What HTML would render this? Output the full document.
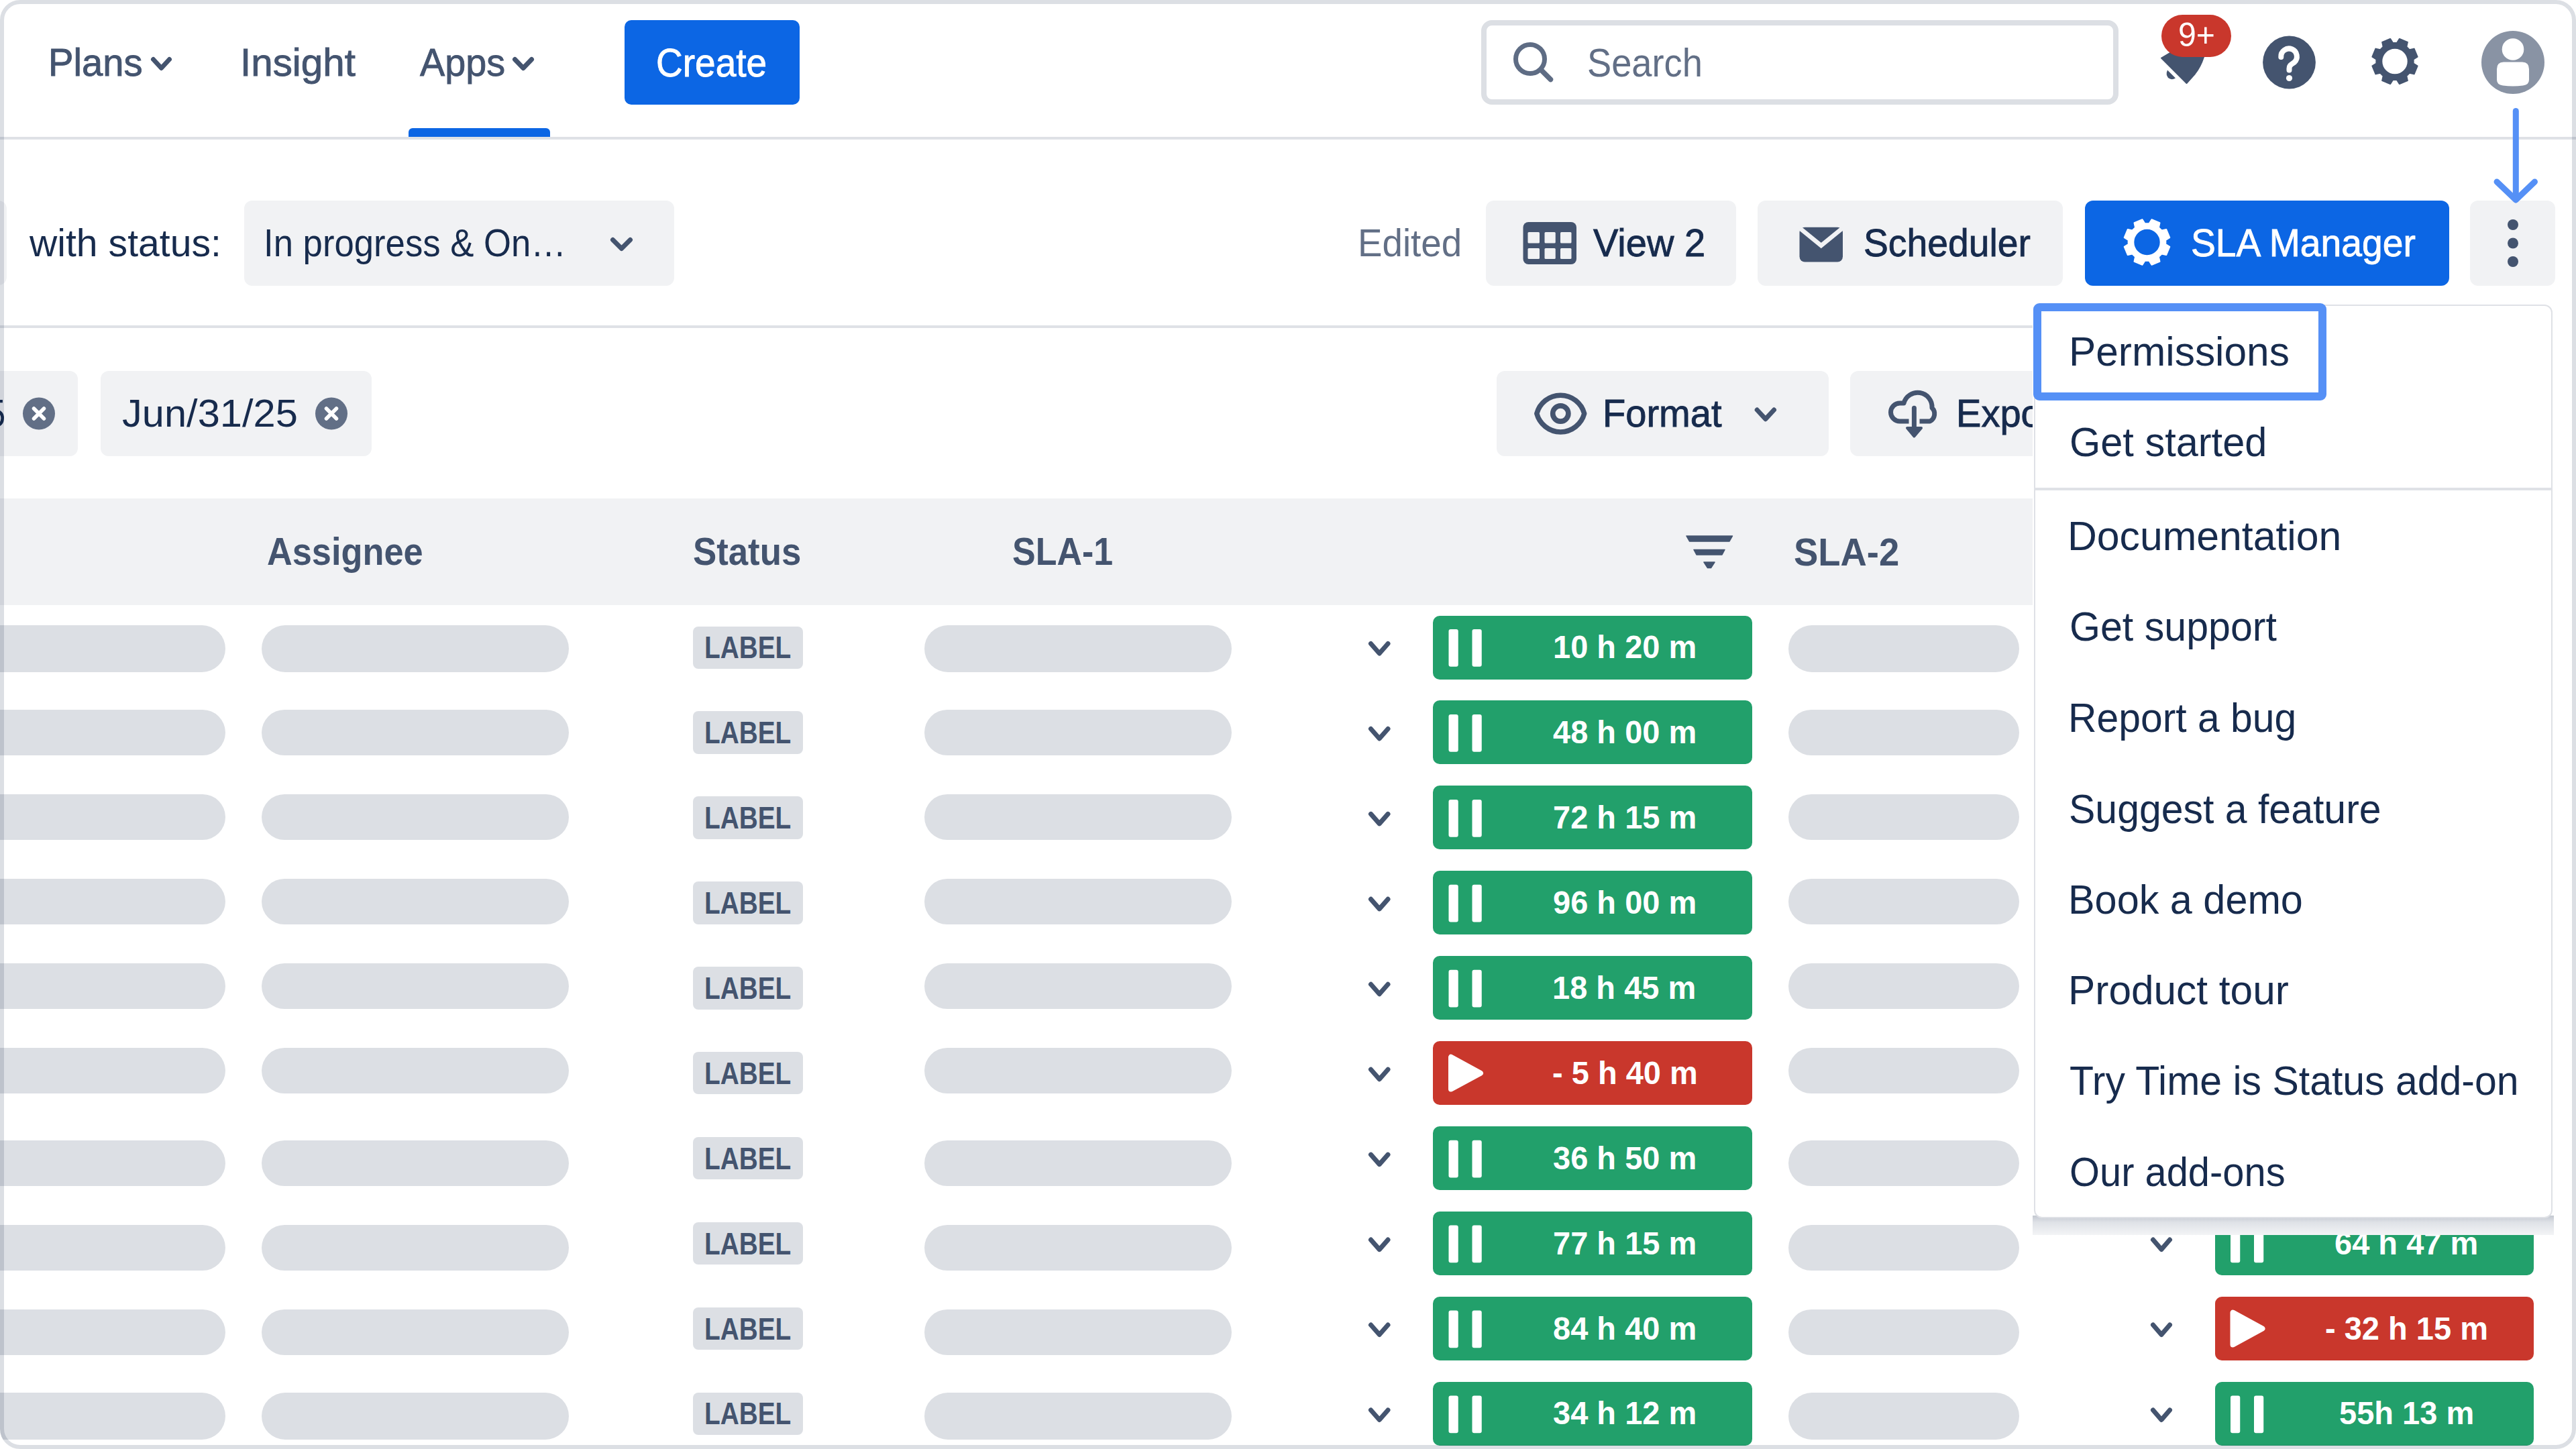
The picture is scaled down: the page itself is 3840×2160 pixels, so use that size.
<!DOCTYPE html>
<html><head><meta charset="utf-8"><style>
html,body{margin:0;padding:0;background:#fff;width:3840px;height:2160px;overflow:hidden}
#c{position:absolute;left:0;top:0;width:3840px;height:2160px;overflow:hidden;border-radius:30px;background:#fff}
#c div{position:absolute}
.t{white-space:nowrap;font-family:"Liberation Sans",sans-serif;transform-origin:0 0}
svg{position:absolute;left:0;top:0}
#frame{position:absolute;left:0;top:0;width:3840px;height:2160px;box-sizing:border-box;border:6px solid rgba(9,30,66,0.142);border-radius:30px}
</style></head><body>
<div id="c">
<div style="left:609.00px;top:191.00px;width:210.50px;height:15.00px;background:#0c66e4;border-radius:6px 6px 0 0;"></div><div style="left:0.00px;top:204.00px;width:3840.00px;height:4.00px;background:#dfe1e6;border-radius:0;"></div><div style="left:930.50px;top:29.50px;width:261.50px;height:126.50px;background:#0c66e4;border-radius:10px;"></div><div style="left:2207.50px;top:29.50px;width:950.50px;height:126.50px;background:#fff;border-radius:16px;box-sizing:border-box;border:8px solid #dcdfe4;"></div><div style="left:-20.00px;top:299.00px;width:30.00px;height:126.00px;background:#f1f2f4;border-radius:12px;"></div><div style="left:364.00px;top:299.00px;width:641.00px;height:127.00px;background:#f1f2f4;border-radius:12px;"></div><div style="left:2215.00px;top:299.00px;width:372.50px;height:126.50px;background:#f1f2f4;border-radius:12px;"></div><div style="left:2620.00px;top:299.00px;width:455.00px;height:127.00px;background:#f1f2f4;border-radius:12px;"></div><div style="left:3107.50px;top:299.00px;width:543.00px;height:127.00px;background:#0c66e4;border-radius:12px;"></div><div style="left:3682.00px;top:299.00px;width:126.50px;height:127.00px;background:#f1f2f4;border-radius:12px;"></div><div style="left:0.00px;top:485.00px;width:3840.00px;height:4.00px;background:#dfe1e6;border-radius:0;"></div><div style="left:-40.00px;top:553.00px;width:156.00px;height:126.50px;background:#f1f2f4;border-radius:12px;"></div><div style="left:150.00px;top:553.00px;width:403.75px;height:126.50px;background:#f1f2f4;border-radius:12px;"></div><div style="left:2231.00px;top:553.00px;width:495.00px;height:126.50px;background:#f1f2f4;border-radius:12px;"></div><div style="left:2758.00px;top:553.00px;width:442.00px;height:126.50px;background:#f1f2f4;border-radius:12px;"></div><div style="left:0.00px;top:743.00px;width:3840.00px;height:159.00px;background:#f1f2f4;border-radius:0;"></div><div style="left:-40.00px;top:931.75px;width:375.75px;height:70.15px;background:#dcdfe4;border-radius:40px;"></div><div style="left:390.00px;top:931.75px;width:458.00px;height:70.15px;background:#dcdfe4;border-radius:40px;"></div><div style="left:1378.00px;top:931.75px;width:457.60px;height:70.15px;background:#dcdfe4;border-radius:40px;"></div><div style="left:2666.00px;top:931.75px;width:344.00px;height:70.15px;background:#dcdfe4;border-radius:40px;"></div><div style="left:1033.25px;top:933.50px;width:163.50px;height:63.25px;background:#dcdfe4;border-radius:8px;"></div><div style="left:2136.00px;top:917.50px;width:475.75px;height:95.00px;background:#22a06b;border-radius:10px;"></div><div style="left:3301.50px;top:917.50px;width:475.75px;height:95.00px;background:#22a06b;border-radius:10px;"></div><div style="left:-40.00px;top:1058.00px;width:375.75px;height:67.60px;background:#dcdfe4;border-radius:40px;"></div><div style="left:390.00px;top:1058.00px;width:458.00px;height:67.60px;background:#dcdfe4;border-radius:40px;"></div><div style="left:1378.00px;top:1058.00px;width:457.60px;height:67.60px;background:#dcdfe4;border-radius:40px;"></div><div style="left:2666.00px;top:1058.00px;width:344.00px;height:67.60px;background:#dcdfe4;border-radius:40px;"></div><div style="left:1033.25px;top:1060.44px;width:163.50px;height:63.25px;background:#dcdfe4;border-radius:8px;"></div><div style="left:2136.00px;top:1044.44px;width:475.75px;height:95.00px;background:#22a06b;border-radius:10px;"></div><div style="left:3301.50px;top:1044.44px;width:475.75px;height:95.00px;background:#22a06b;border-radius:10px;"></div><div style="left:-40.00px;top:1183.70px;width:375.75px;height:68.30px;background:#dcdfe4;border-radius:40px;"></div><div style="left:390.00px;top:1183.70px;width:458.00px;height:68.30px;background:#dcdfe4;border-radius:40px;"></div><div style="left:1378.00px;top:1183.70px;width:457.60px;height:68.30px;background:#dcdfe4;border-radius:40px;"></div><div style="left:2666.00px;top:1183.70px;width:344.00px;height:68.30px;background:#dcdfe4;border-radius:40px;"></div><div style="left:1033.25px;top:1187.38px;width:163.50px;height:63.25px;background:#dcdfe4;border-radius:8px;"></div><div style="left:2136.00px;top:1171.38px;width:475.75px;height:95.00px;background:#22a06b;border-radius:10px;"></div><div style="left:3301.50px;top:1171.38px;width:475.75px;height:95.00px;background:#22a06b;border-radius:10px;"></div><div style="left:-40.00px;top:1310.00px;width:375.75px;height:68.00px;background:#dcdfe4;border-radius:40px;"></div><div style="left:390.00px;top:1310.00px;width:458.00px;height:68.00px;background:#dcdfe4;border-radius:40px;"></div><div style="left:1378.00px;top:1310.00px;width:457.60px;height:68.00px;background:#dcdfe4;border-radius:40px;"></div><div style="left:2666.00px;top:1310.00px;width:344.00px;height:68.00px;background:#dcdfe4;border-radius:40px;"></div><div style="left:1033.25px;top:1314.32px;width:163.50px;height:63.25px;background:#dcdfe4;border-radius:8px;"></div><div style="left:2136.00px;top:1298.32px;width:475.75px;height:95.00px;background:#22a06b;border-radius:10px;"></div><div style="left:3301.50px;top:1298.32px;width:475.75px;height:95.00px;background:#22a06b;border-radius:10px;"></div><div style="left:-40.00px;top:1436.00px;width:375.75px;height:67.80px;background:#dcdfe4;border-radius:40px;"></div><div style="left:390.00px;top:1436.00px;width:458.00px;height:67.80px;background:#dcdfe4;border-radius:40px;"></div><div style="left:1378.00px;top:1436.00px;width:457.60px;height:67.80px;background:#dcdfe4;border-radius:40px;"></div><div style="left:2666.00px;top:1436.00px;width:344.00px;height:67.80px;background:#dcdfe4;border-radius:40px;"></div><div style="left:1033.25px;top:1441.26px;width:163.50px;height:63.25px;background:#dcdfe4;border-radius:8px;"></div><div style="left:2136.00px;top:1425.26px;width:475.75px;height:95.00px;background:#22a06b;border-radius:10px;"></div><div style="left:3301.50px;top:1425.26px;width:475.75px;height:95.00px;background:#22a06b;border-radius:10px;"></div><div style="left:-40.00px;top:1561.70px;width:375.75px;height:68.20px;background:#dcdfe4;border-radius:40px;"></div><div style="left:390.00px;top:1561.70px;width:458.00px;height:68.20px;background:#dcdfe4;border-radius:40px;"></div><div style="left:1378.00px;top:1561.70px;width:457.60px;height:68.20px;background:#dcdfe4;border-radius:40px;"></div><div style="left:2666.00px;top:1561.70px;width:344.00px;height:68.20px;background:#dcdfe4;border-radius:40px;"></div><div style="left:1033.25px;top:1568.20px;width:163.50px;height:63.25px;background:#dcdfe4;border-radius:8px;"></div><div style="left:2136.00px;top:1552.20px;width:475.75px;height:95.00px;background:#c9372c;border-radius:10px;"></div><div style="left:3301.50px;top:1552.20px;width:475.75px;height:95.00px;background:#22a06b;border-radius:10px;"></div><div style="left:-40.00px;top:1700.00px;width:375.75px;height:67.75px;background:#dcdfe4;border-radius:40px;"></div><div style="left:390.00px;top:1700.00px;width:458.00px;height:67.75px;background:#dcdfe4;border-radius:40px;"></div><div style="left:1378.00px;top:1700.00px;width:457.60px;height:67.75px;background:#dcdfe4;border-radius:40px;"></div><div style="left:2666.00px;top:1700.00px;width:344.00px;height:67.75px;background:#dcdfe4;border-radius:40px;"></div><div style="left:1033.25px;top:1695.14px;width:163.50px;height:63.25px;background:#dcdfe4;border-radius:8px;"></div><div style="left:2136.00px;top:1679.14px;width:475.75px;height:95.00px;background:#22a06b;border-radius:10px;"></div><div style="left:3301.50px;top:1679.14px;width:475.75px;height:95.00px;background:#22a06b;border-radius:10px;"></div><div style="left:-40.00px;top:1826.00px;width:375.75px;height:67.75px;background:#dcdfe4;border-radius:40px;"></div><div style="left:390.00px;top:1826.00px;width:458.00px;height:67.75px;background:#dcdfe4;border-radius:40px;"></div><div style="left:1378.00px;top:1826.00px;width:457.60px;height:67.75px;background:#dcdfe4;border-radius:40px;"></div><div style="left:2666.00px;top:1826.00px;width:344.00px;height:67.75px;background:#dcdfe4;border-radius:40px;"></div><div style="left:1033.25px;top:1822.08px;width:163.50px;height:63.25px;background:#dcdfe4;border-radius:8px;"></div><div style="left:2136.00px;top:1806.08px;width:475.75px;height:95.00px;background:#22a06b;border-radius:10px;"></div><div style="left:3301.50px;top:1806.08px;width:475.75px;height:95.00px;background:#22a06b;border-radius:10px;"></div><div style="left:-40.00px;top:1952.00px;width:375.75px;height:68.00px;background:#dcdfe4;border-radius:40px;"></div><div style="left:390.00px;top:1952.00px;width:458.00px;height:68.00px;background:#dcdfe4;border-radius:40px;"></div><div style="left:1378.00px;top:1952.00px;width:457.60px;height:68.00px;background:#dcdfe4;border-radius:40px;"></div><div style="left:2666.00px;top:1952.00px;width:344.00px;height:68.00px;background:#dcdfe4;border-radius:40px;"></div><div style="left:1033.25px;top:1949.02px;width:163.50px;height:63.25px;background:#dcdfe4;border-radius:8px;"></div><div style="left:2136.00px;top:1933.02px;width:475.75px;height:95.00px;background:#22a06b;border-radius:10px;"></div><div style="left:3301.50px;top:1933.02px;width:475.75px;height:95.00px;background:#c9372c;border-radius:10px;"></div><div style="left:-40.00px;top:2076.00px;width:375.75px;height:70.00px;background:#dcdfe4;border-radius:40px;"></div><div style="left:390.00px;top:2076.00px;width:458.00px;height:70.00px;background:#dcdfe4;border-radius:40px;"></div><div style="left:1378.00px;top:2076.00px;width:457.60px;height:70.00px;background:#dcdfe4;border-radius:40px;"></div><div style="left:2666.00px;top:2076.00px;width:344.00px;height:70.00px;background:#dcdfe4;border-radius:40px;"></div><div style="left:1033.25px;top:2075.96px;width:163.50px;height:63.25px;background:#dcdfe4;border-radius:8px;"></div><div style="left:2136.00px;top:2059.96px;width:475.75px;height:95.00px;background:#22a06b;border-radius:10px;"></div><div style="left:3301.50px;top:2059.96px;width:475.75px;height:95.00px;background:#22a06b;border-radius:10px;"></div>
<svg width="3840" height="2160" viewBox="0 0 3840 2160"><path d="M228.50,88.50 L240.50,101.50 L252.50,88.50" fill="none" stroke="#44546f" stroke-width="7" stroke-linecap="round" stroke-linejoin="round"/><path d="M767.50,88.50 L780.00,101.50 L792.50,88.50" fill="none" stroke="#44546f" stroke-width="7" stroke-linecap="round" stroke-linejoin="round"/><circle cx="2281" cy="88" r="21.5" fill="none" stroke="#5e6c84" stroke-width="7"/><path d="M2298,105 L2311.5,118.5" stroke="#5e6c84" stroke-width="7.5" stroke-linecap="round"/><path d="M3222,86.5 L3250,70 L3290,70 L3285,85 Q3280,100 3272,110 L3259.5,124 Z" fill="#44546f" stroke="#44546f" stroke-width="2" stroke-linejoin="round"/><path d="M3231,104.5 L3243,116.5 Q3237,120 3232,116 Q3228,111 3231,104.5 Z" fill="#44546f"/><circle cx="3412.5" cy="93" r="39.4" fill="#44546f"/><path d="M3400.3,85 A11.8,11.8 0 1 1 3420,93 C3415,96.5 3412.5,97.5 3412.5,102 L3412.5,104.5" fill="none" stroke="#fff" stroke-width="8" stroke-linecap="round" stroke-linejoin="round"/><circle cx="3412.5" cy="116.5" r="4.6" fill="#fff"/><path d="M3573.13,63.88 L3576.91,57.90 L3588.87,62.86 L3587.32,69.76 L3591.74,74.18 L3598.64,72.63 L3603.60,84.59 L3597.62,88.37 L3597.62,94.63 L3603.60,98.41 L3598.64,110.37 L3591.74,108.82 L3587.32,113.24 L3588.87,120.14 L3576.91,125.10 L3573.13,119.12 L3566.87,119.12 L3563.09,125.10 L3551.13,120.14 L3552.68,113.24 L3548.26,108.82 L3541.36,110.37 L3536.40,98.41 L3542.38,94.63 L3542.38,88.37 L3536.40,84.59 L3541.36,72.63 L3548.26,74.18 L3552.68,69.76 L3551.13,62.86 L3563.09,57.90 L3566.87,63.88 Z M3589.70,91.50 A19.7,19.7 0 1 0 3550.30,91.50 A19.7,19.7 0 1 0 3589.70,91.50 Z" fill="#44546f" fill-rule="evenodd" stroke="#44546f" stroke-width="2" stroke-linejoin="round"/><circle cx="3746" cy="93" r="47" fill="#8993a4"/><circle cx="3746" cy="73.5" r="16.3" fill="#fff"/><path d="M3722,103 Q3722,92.4 3732,92.4 L3760,92.4 Q3770,92.4 3770,103 L3770,119 Q3770,126.5 3761,127.5 Q3746,129.5 3731,127.5 Q3722,126.5 3722,119 Z" fill="#fff"/><path d="M3750.3,165.5 L3750.3,297" stroke="#5590f6" stroke-width="9" stroke-linecap="round"/><path d="M3722,271 L3750.3,298 L3778.5,271" fill="none" stroke="#5590f6" stroke-width="9" stroke-linecap="round" stroke-linejoin="round"/><path d="M913.50,357.50 L926.50,370.50 L939.50,357.50" fill="none" stroke="#44546f" stroke-width="7" stroke-linecap="round" stroke-linejoin="round"/><rect x="2270.5" y="331" width="79.5" height="63" rx="8" fill="#44546f"/><rect x="2277.5" y="346" width="17.5" height="16.5" rx="1.5" fill="#f1f2f4"/><rect x="2277.5" y="370" width="17.5" height="16" rx="1.5" fill="#f1f2f4"/><rect x="2302.5" y="346" width="16.25" height="16.5" rx="1.5" fill="#f1f2f4"/><rect x="2302.5" y="370" width="16.25" height="16" rx="1.5" fill="#f1f2f4"/><rect x="2326" y="346" width="16.5" height="16.5" rx="1.5" fill="#f1f2f4"/><rect x="2326" y="370" width="16.5" height="16" rx="1.5" fill="#f1f2f4"/><rect x="2682.5" y="338.75" width="64.5" height="51.75" rx="8" fill="#44546f"/><path d="M2684,341 L2714.75,366 L2745.5,341" fill="none" stroke="#f1f2f4" stroke-width="6.5" stroke-linejoin="miter"/><path d="M3203.65,333.18 L3207.45,327.21 L3219.48,332.19 L3217.95,339.10 L3222.40,343.55 L3229.31,342.02 L3234.29,354.05 L3228.32,357.85 L3228.32,364.15 L3234.29,367.95 L3229.31,379.98 L3222.40,378.45 L3217.95,382.90 L3219.48,389.81 L3207.45,394.79 L3203.65,388.82 L3197.35,388.82 L3193.55,394.79 L3181.52,389.81 L3183.05,382.90 L3178.60,378.45 L3171.69,379.98 L3166.71,367.95 L3172.68,364.15 L3172.68,357.85 L3166.71,354.05 L3171.69,342.02 L3178.60,343.55 L3183.05,339.10 L3181.52,332.19 L3193.55,327.21 L3197.35,333.18 Z M3220.70,361.00 A20.2,20.2 0 1 0 3180.30,361.00 A20.2,20.2 0 1 0 3220.70,361.00 Z" fill="#fff" fill-rule="evenodd" stroke="#fff" stroke-width="2" stroke-linejoin="round"/><circle cx="3746" cy="335" r="8" fill="#44546f"/><circle cx="3746" cy="362.5" r="8" fill="#44546f"/><circle cx="3746" cy="390" r="8" fill="#44546f"/><circle cx="58" cy="616.5" r="24" fill="#626f86"/><path d="M50.5,609.0 L65.5,624.0 M65.5,609.0 L50.5,624.0" stroke="#fff" stroke-width="5.5" stroke-linecap="round"/><circle cx="494" cy="616.5" r="24" fill="#626f86"/><path d="M486.5,609.0 L501.5,624.0 M501.5,609.0 L486.5,624.0" stroke="#fff" stroke-width="5.5" stroke-linecap="round"/><path d="M2290.8,616.5 C2295,601 2309,589.2 2326.25,589.2 C2343.5,589.2 2357.5,601 2361.7,616.5 C2357.5,632 2343.5,643.9 2326.25,643.9 C2309,643.9 2295,632 2290.8,616.5 Z" fill="none" stroke="#44546f" stroke-width="7.5" stroke-linejoin="round"/><circle cx="2326.3" cy="616.5" r="11.6" fill="none" stroke="#44546f" stroke-width="7.6"/><path d="M2619.20,611.00 L2631.85,624.70 L2644.50,611.00" fill="none" stroke="#44546f" stroke-width="7" stroke-linecap="round" stroke-linejoin="round"/><path d="M2845.5,628 L2832,628 A13.5,13.5 0 0 1 2832,601 L2838,601 A21.4,21.4 0 0 1 2880,608 A12.5,12.5 0 0 1 2877,628 L2861.5,628" fill="none" stroke="#44546f" stroke-width="7" stroke-linejoin="round"/><path d="M2853.4,608.3 L2853.4,644" stroke="#44546f" stroke-width="7" stroke-linecap="round"/><path d="M2843,638 L2864,638 L2853.4,650.5 Z" fill="#44546f" stroke="#44546f" stroke-width="4" stroke-linejoin="round"/><path d="M2514,799 L2582.5,799 L2578,807 L2518.5,807 Z M2525,819.5 L2571,819.5 L2567,827 L2529,827 Z M2540,838 L2556,838 L2550.5,846.5 L2545.5,846.5 Z" fill="#44546f" stroke="#44546f" stroke-width="1.5" stroke-linejoin="round"/><path d="M2043.50,959.50 L2056.25,974.00 L2069.00,959.50" fill="none" stroke="#44546f" stroke-width="7" stroke-linecap="round" stroke-linejoin="round"/><rect x="2159.5" y="938.00" width="14.25" height="55.75" rx="3" fill="#fff"/><rect x="2194.5" y="938.00" width="14.25" height="55.75" rx="3" fill="#fff"/><path d="M3209.50,959.50 L3222.00,974.00 L3234.50,959.50" fill="none" stroke="#44546f" stroke-width="7" stroke-linecap="round" stroke-linejoin="round"/><rect x="3325.0" y="938.00" width="14.25" height="55.75" rx="3" fill="#fff"/><rect x="3360.0" y="938.00" width="14.25" height="55.75" rx="3" fill="#fff"/><path d="M2043.50,1086.44 L2056.25,1100.94 L2069.00,1086.44" fill="none" stroke="#44546f" stroke-width="7" stroke-linecap="round" stroke-linejoin="round"/><rect x="2159.5" y="1064.94" width="14.25" height="55.75" rx="3" fill="#fff"/><rect x="2194.5" y="1064.94" width="14.25" height="55.75" rx="3" fill="#fff"/><path d="M3209.50,1086.44 L3222.00,1100.94 L3234.50,1086.44" fill="none" stroke="#44546f" stroke-width="7" stroke-linecap="round" stroke-linejoin="round"/><rect x="3325.0" y="1064.94" width="14.25" height="55.75" rx="3" fill="#fff"/><rect x="3360.0" y="1064.94" width="14.25" height="55.75" rx="3" fill="#fff"/><path d="M2043.50,1213.38 L2056.25,1227.88 L2069.00,1213.38" fill="none" stroke="#44546f" stroke-width="7" stroke-linecap="round" stroke-linejoin="round"/><rect x="2159.5" y="1191.88" width="14.25" height="55.75" rx="3" fill="#fff"/><rect x="2194.5" y="1191.88" width="14.25" height="55.75" rx="3" fill="#fff"/><path d="M3209.50,1213.38 L3222.00,1227.88 L3234.50,1213.38" fill="none" stroke="#44546f" stroke-width="7" stroke-linecap="round" stroke-linejoin="round"/><rect x="3325.0" y="1191.88" width="14.25" height="55.75" rx="3" fill="#fff"/><rect x="3360.0" y="1191.88" width="14.25" height="55.75" rx="3" fill="#fff"/><path d="M2043.50,1340.32 L2056.25,1354.82 L2069.00,1340.32" fill="none" stroke="#44546f" stroke-width="7" stroke-linecap="round" stroke-linejoin="round"/><rect x="2159.5" y="1318.82" width="14.25" height="55.75" rx="3" fill="#fff"/><rect x="2194.5" y="1318.82" width="14.25" height="55.75" rx="3" fill="#fff"/><path d="M3209.50,1340.32 L3222.00,1354.82 L3234.50,1340.32" fill="none" stroke="#44546f" stroke-width="7" stroke-linecap="round" stroke-linejoin="round"/><rect x="3325.0" y="1318.82" width="14.25" height="55.75" rx="3" fill="#fff"/><rect x="3360.0" y="1318.82" width="14.25" height="55.75" rx="3" fill="#fff"/><path d="M2043.50,1467.26 L2056.25,1481.76 L2069.00,1467.26" fill="none" stroke="#44546f" stroke-width="7" stroke-linecap="round" stroke-linejoin="round"/><rect x="2159.5" y="1445.76" width="14.25" height="55.75" rx="3" fill="#fff"/><rect x="2194.5" y="1445.76" width="14.25" height="55.75" rx="3" fill="#fff"/><path d="M3209.50,1467.26 L3222.00,1481.76 L3234.50,1467.26" fill="none" stroke="#44546f" stroke-width="7" stroke-linecap="round" stroke-linejoin="round"/><rect x="3325.0" y="1445.76" width="14.25" height="55.75" rx="3" fill="#fff"/><rect x="3360.0" y="1445.76" width="14.25" height="55.75" rx="3" fill="#fff"/><path d="M2043.50,1594.20 L2056.25,1608.70 L2069.00,1594.20" fill="none" stroke="#44546f" stroke-width="7" stroke-linecap="round" stroke-linejoin="round"/><path d="M2163,1575.80 L2163,1623.60 L2207,1599.70 Z" fill="#fff" stroke="#fff" stroke-width="8" stroke-linejoin="round"/><path d="M3209.50,1594.20 L3222.00,1608.70 L3234.50,1594.20" fill="none" stroke="#44546f" stroke-width="7" stroke-linecap="round" stroke-linejoin="round"/><rect x="3325.0" y="1572.70" width="14.25" height="55.75" rx="3" fill="#fff"/><rect x="3360.0" y="1572.70" width="14.25" height="55.75" rx="3" fill="#fff"/><path d="M2043.50,1721.14 L2056.25,1735.64 L2069.00,1721.14" fill="none" stroke="#44546f" stroke-width="7" stroke-linecap="round" stroke-linejoin="round"/><rect x="2159.5" y="1699.64" width="14.25" height="55.75" rx="3" fill="#fff"/><rect x="2194.5" y="1699.64" width="14.25" height="55.75" rx="3" fill="#fff"/><path d="M3209.50,1721.14 L3222.00,1735.64 L3234.50,1721.14" fill="none" stroke="#44546f" stroke-width="7" stroke-linecap="round" stroke-linejoin="round"/><rect x="3325.0" y="1699.64" width="14.25" height="55.75" rx="3" fill="#fff"/><rect x="3360.0" y="1699.64" width="14.25" height="55.75" rx="3" fill="#fff"/><path d="M2043.50,1848.08 L2056.25,1862.58 L2069.00,1848.08" fill="none" stroke="#44546f" stroke-width="7" stroke-linecap="round" stroke-linejoin="round"/><rect x="2159.5" y="1826.58" width="14.25" height="55.75" rx="3" fill="#fff"/><rect x="2194.5" y="1826.58" width="14.25" height="55.75" rx="3" fill="#fff"/><path d="M3209.50,1848.08 L3222.00,1862.58 L3234.50,1848.08" fill="none" stroke="#44546f" stroke-width="7" stroke-linecap="round" stroke-linejoin="round"/><rect x="3325.0" y="1826.58" width="14.25" height="55.75" rx="3" fill="#fff"/><rect x="3360.0" y="1826.58" width="14.25" height="55.75" rx="3" fill="#fff"/><path d="M2043.50,1975.02 L2056.25,1989.52 L2069.00,1975.02" fill="none" stroke="#44546f" stroke-width="7" stroke-linecap="round" stroke-linejoin="round"/><rect x="2159.5" y="1953.52" width="14.25" height="55.75" rx="3" fill="#fff"/><rect x="2194.5" y="1953.52" width="14.25" height="55.75" rx="3" fill="#fff"/><path d="M3209.50,1975.02 L3222.00,1989.52 L3234.50,1975.02" fill="none" stroke="#44546f" stroke-width="7" stroke-linecap="round" stroke-linejoin="round"/><path d="M3328.5,1956.62 L3328.5,2004.42 L3372.5,1980.52 Z" fill="#fff" stroke="#fff" stroke-width="8" stroke-linejoin="round"/><path d="M2043.50,2101.96 L2056.25,2116.46 L2069.00,2101.96" fill="none" stroke="#44546f" stroke-width="7" stroke-linecap="round" stroke-linejoin="round"/><rect x="2159.5" y="2080.46" width="14.25" height="55.75" rx="3" fill="#fff"/><rect x="2194.5" y="2080.46" width="14.25" height="55.75" rx="3" fill="#fff"/><path d="M3209.50,2101.96 L3222.00,2116.46 L3234.50,2101.96" fill="none" stroke="#44546f" stroke-width="7" stroke-linecap="round" stroke-linejoin="round"/><rect x="3325.0" y="2080.46" width="14.25" height="55.75" rx="3" fill="#fff"/><rect x="3360.0" y="2080.46" width="14.25" height="55.75" rx="3" fill="#fff"/></svg>
<div class="t" style="left:72.36px;top:64px;font-size:58px;line-height:58px;color:#44546f;transform:scaleX(0.9687);-webkit-text-stroke:0.9px #44546f;">Plans</div><div class="t" style="left:357.60px;top:64px;font-size:58px;line-height:58px;color:#44546f;transform:scaleX(1.0060);-webkit-text-stroke:0.9px #44546f;">Insight</div><div class="t" style="left:625.86px;top:64px;font-size:58px;line-height:58px;color:#44546f;transform:scaleX(0.9611);-webkit-text-stroke:0.9px #44546f;">Apps</div><div class="t" style="left:978.25px;top:64px;font-size:60px;line-height:60px;color:#fff;transform:scaleX(0.9172);-webkit-text-stroke:0.9px #fff;">Create</div><div class="t" style="left:2365.56px;top:64px;font-size:60px;line-height:60px;color:#626f86;transform:scaleX(0.9041);">Search</div><div class="t" style="left:44.14px;top:333px;font-size:58px;line-height:58px;color:#172b4d;transform:scaleX(0.9857);">with status:</div><div class="t" style="left:392.63px;top:333px;font-size:58px;line-height:58px;color:#172b4d;transform:scaleX(0.9084);">In progress &amp; On…</div><div class="t" style="left:2024.23px;top:333px;font-size:58px;line-height:58px;color:#626f86;transform:scaleX(0.9438);">Edited</div><div class="t" style="left:2374.72px;top:333px;font-size:58px;line-height:58px;color:#172b4d;transform:scaleX(0.9659);-webkit-text-stroke:0.9px #172b4d;">View 2</div><div class="t" style="left:2778.01px;top:333px;font-size:58px;line-height:58px;color:#172b4d;transform:scaleX(0.9528);-webkit-text-stroke:0.9px #172b4d;">Scheduler</div><div class="t" style="left:3266.01px;top:333px;font-size:58px;line-height:58px;color:#fff;transform:scaleX(0.9526);-webkit-text-stroke:0.9px #fff;">SLA Manager</div><div class="t" style="left:-20.02px;top:587px;font-size:58px;line-height:58px;color:#172b4d;transform:scaleX(0.8711);">5</div><div class="t" style="left:181.61px;top:587px;font-size:58px;line-height:58px;color:#172b4d;transform:scaleX(1.0275);">Jun/31/25</div><div class="t" style="left:2388.88px;top:587px;font-size:58px;line-height:58px;color:#172b4d;transform:scaleX(0.9664);-webkit-text-stroke:0.9px #172b4d;">Format</div><div class="t" style="left:2915.68px;top:587px;font-size:58px;line-height:58px;color:#172b4d;transform:scaleX(0.9664);-webkit-text-stroke:0.9px #172b4d;">Export</div><div class="t" style="left:398.19px;top:793px;font-size:58px;line-height:58px;color:#44546f;font-weight:700;transform:scaleX(0.9019);">Assignee</div><div class="t" style="left:1033.42px;top:793px;font-size:58px;line-height:58px;color:#44546f;font-weight:700;transform:scaleX(0.9097);">Status</div><div class="t" style="left:1508.94px;top:793px;font-size:58px;line-height:58px;color:#44546f;font-weight:700;transform:scaleX(0.8956);">SLA-1</div><div class="t" style="left:2674.37px;top:794px;font-size:58px;line-height:58px;color:#44546f;font-weight:700;transform:scaleX(0.9385);">SLA-2</div><div class="t" style="left:1049.88px;top:942px;font-size:46px;line-height:46px;color:#44546f;font-weight:700;transform:scaleX(0.8434);">LABEL</div><div class="t" style="left:2314.56px;top:940px;font-size:49px;line-height:49px;color:#fff;font-weight:700;transform:scaleX(0.9594);">10 h 20 m</div><div class="t" style="left:3479.81px;top:940px;font-size:49px;line-height:49px;color:#fff;font-weight:700;transform:scaleX(0.9594);">12 h 00 m</div><div class="t" style="left:1049.88px;top:1069px;font-size:46px;line-height:46px;color:#44546f;font-weight:700;transform:scaleX(0.8434);">LABEL</div><div class="t" style="left:2315.43px;top:1067px;font-size:49px;line-height:49px;color:#fff;font-weight:700;transform:scaleX(0.9594);">48 h 00 m</div><div class="t" style="left:3480.46px;top:1067px;font-size:49px;line-height:49px;color:#fff;font-weight:700;transform:scaleX(0.9594);">20 h 10 m</div><div class="t" style="left:1049.88px;top:1196px;font-size:46px;line-height:46px;color:#44546f;font-weight:700;transform:scaleX(0.8434);">LABEL</div><div class="t" style="left:2314.78px;top:1194px;font-size:49px;line-height:49px;color:#fff;font-weight:700;transform:scaleX(0.9594);">72 h 15 m</div><div class="t" style="left:3480.75px;top:1194px;font-size:49px;line-height:49px;color:#fff;font-weight:700;transform:scaleX(0.9594);">30 h 00 m</div><div class="t" style="left:1049.88px;top:1323px;font-size:46px;line-height:46px;color:#44546f;font-weight:700;transform:scaleX(0.8434);">LABEL</div><div class="t" style="left:2314.96px;top:1321px;font-size:49px;line-height:49px;color:#fff;font-weight:700;transform:scaleX(0.9594);">96 h 00 m</div><div class="t" style="left:3480.93px;top:1321px;font-size:49px;line-height:49px;color:#fff;font-weight:700;transform:scaleX(0.9594);">40 h 00 m</div><div class="t" style="left:1049.88px;top:1450px;font-size:46px;line-height:46px;color:#44546f;font-weight:700;transform:scaleX(0.8434);">LABEL</div><div class="t" style="left:2314.31px;top:1448px;font-size:49px;line-height:49px;color:#fff;font-weight:700;transform:scaleX(0.9594);">18 h 45 m</div><div class="t" style="left:3480.46px;top:1448px;font-size:49px;line-height:49px;color:#fff;font-weight:700;transform:scaleX(0.9594);">22 h 30 m</div><div class="t" style="left:1049.88px;top:1577px;font-size:46px;line-height:46px;color:#44546f;font-weight:700;transform:scaleX(0.8434);">LABEL</div><div class="t" style="left:2313.55px;top:1575px;font-size:49px;line-height:49px;color:#fff;font-weight:700;transform:scaleX(0.9594);">- 5 h 40 m</div><div class="t" style="left:3479.81px;top:1575px;font-size:49px;line-height:49px;color:#fff;font-weight:700;transform:scaleX(0.9594);">10 h 00 m</div><div class="t" style="left:1049.88px;top:1704px;font-size:46px;line-height:46px;color:#44546f;font-weight:700;transform:scaleX(0.8434);">LABEL</div><div class="t" style="left:2315.25px;top:1702px;font-size:49px;line-height:49px;color:#fff;font-weight:700;transform:scaleX(0.9594);">36 h 50 m</div><div class="t" style="left:3480.58px;top:1702px;font-size:49px;line-height:49px;color:#fff;font-weight:700;transform:scaleX(0.9594);">50 h 00 m</div><div class="t" style="left:1049.88px;top:1831px;font-size:46px;line-height:46px;color:#44546f;font-weight:700;transform:scaleX(0.8434);">LABEL</div><div class="t" style="left:2314.78px;top:1829px;font-size:49px;line-height:49px;color:#fff;font-weight:700;transform:scaleX(0.9594);">77 h 15 m</div><div class="t" style="left:3480.40px;top:1829px;font-size:49px;line-height:49px;color:#fff;font-weight:700;transform:scaleX(0.9594);">64 h 47 m</div><div class="t" style="left:1049.88px;top:1958px;font-size:46px;line-height:46px;color:#44546f;font-weight:700;transform:scaleX(0.8434);">LABEL</div><div class="t" style="left:2315.02px;top:1956px;font-size:49px;line-height:49px;color:#fff;font-weight:700;transform:scaleX(0.9594);">84 h 40 m</div><div class="t" style="left:3466.00px;top:1956px;font-size:49px;line-height:49px;color:#fff;font-weight:700;transform:scaleX(0.9594);">- 32 h 15 m</div><div class="t" style="left:1049.88px;top:2084px;font-size:46px;line-height:46px;color:#44546f;font-weight:700;transform:scaleX(0.8434);">LABEL</div><div class="t" style="left:2315.25px;top:2082px;font-size:49px;line-height:49px;color:#fff;font-weight:700;transform:scaleX(0.9594);">34 h 12 m</div><div class="t" style="left:3487.10px;top:2082px;font-size:49px;line-height:49px;color:#fff;font-weight:700;transform:scaleX(0.9594);">55h 13 m</div>
<div style="left:3222.00px;top:21.70px;width:103.70px;height:63.30px;background:#c9372c;border-radius:32px;"></div><div class="t" style="left:3247.11px;top:27px;font-size:50px;line-height:50px;color:#fff;transform:scaleX(0.9631);">9+</div>
<div style="left:3030.00px;top:454.00px;width:810.00px;height:1361.00px;background:#fff;border-radius:0;"></div><div style="left:3030.00px;top:1812.00px;width:777.00px;height:28.60px;background:linear-gradient(to bottom,#c3c8d1 0%,#dfe2e7 35%,#f3f4f6 100%);border-radius:0;"></div><div style="left:3032.00px;top:454.00px;width:773.00px;height:1361.60px;background:#fff;border-radius:12px;box-sizing:border-box;border:2.5px solid #dfe1e6;"></div><div style="left:3033.00px;top:727.00px;width:770.00px;height:4.00px;background:#dfe1e6;border-radius:0;"></div><div style="left:3030.50px;top:451.75px;width:437.50px;height:145.25px;background:transparent;border-radius:9px;box-sizing:border-box;border:12.5px solid #5590f6;"></div>
<svg width="3840" height="2160" viewBox="0 0 3840 2160"></svg>
<div class="t" style="left:3083.77px;top:493px;font-size:62px;line-height:62px;color:#172b4d;transform:scaleX(0.9741);">Permissions</div><div class="t" style="left:3084.53px;top:628px;font-size:62px;line-height:62px;color:#172b4d;transform:scaleX(0.9596);">Get started</div><div class="t" style="left:3082.49px;top:768px;font-size:62px;line-height:62px;color:#172b4d;transform:scaleX(0.9793);">Documentation</div><div class="t" style="left:3084.54px;top:903px;font-size:62px;line-height:62px;color:#172b4d;transform:scaleX(0.9535);">Get support</div><div class="t" style="left:3083.15px;top:1039px;font-size:62px;line-height:62px;color:#172b4d;transform:scaleX(0.9489);">Report a bug</div><div class="t" style="left:3083.85px;top:1175px;font-size:62px;line-height:62px;color:#172b4d;transform:scaleX(0.9512);">Suggest a feature</div><div class="t" style="left:3083.10px;top:1310px;font-size:62px;line-height:62px;color:#172b4d;transform:scaleX(0.9577);">Book a demo</div><div class="t" style="left:3083.02px;top:1445px;font-size:62px;line-height:62px;color:#172b4d;transform:scaleX(0.9738);">Product tour</div><div class="t" style="left:3084.67px;top:1580px;font-size:62px;line-height:62px;color:#172b4d;transform:scaleX(0.9510);">Try Time is Status add-on</div><div class="t" style="left:3084.75px;top:1716px;font-size:62px;line-height:62px;color:#172b4d;transform:scaleX(0.9331);">Our add-ons</div>
</div>
<div id="frame"></div>
</body></html>
